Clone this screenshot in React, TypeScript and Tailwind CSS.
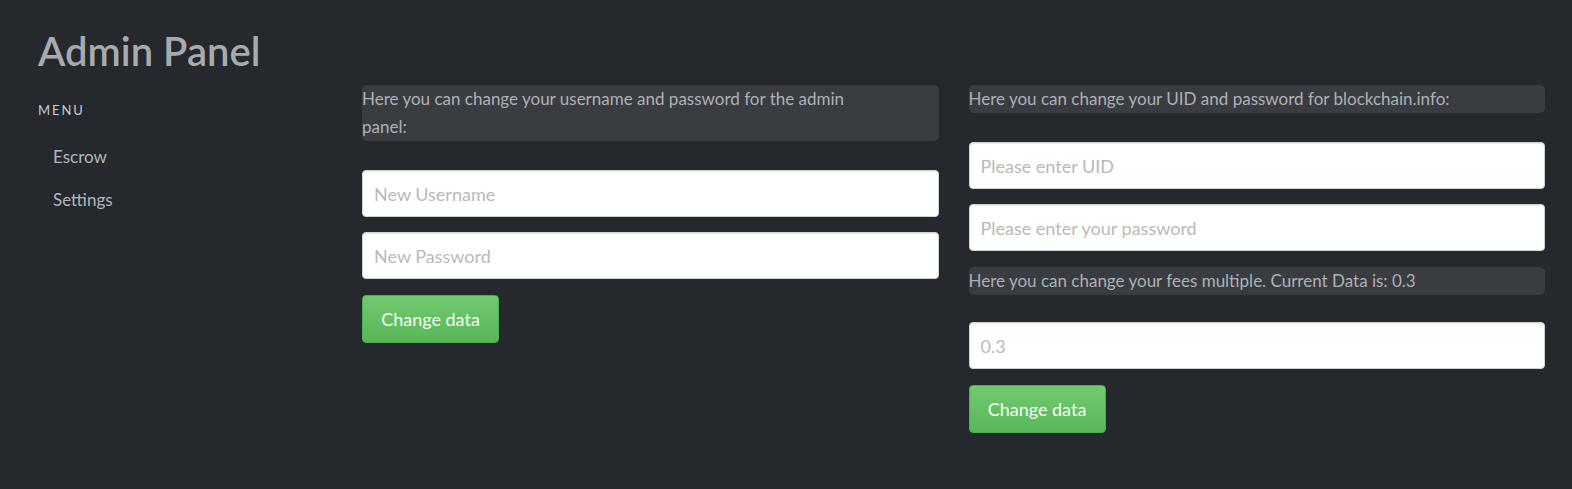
import React from 'react';

const FONT = "font-['Lato','Open_Sans',sans-serif]";

function Field({ placeholder }: { placeholder: string }) {
  return (
    <input
      type="text"
      placeholder={placeholder}
      className="block w-full h-[47px] rounded-[4px] border border-[#cfd3d6] bg-white px-[11px] text-[18px] text-[#555] placeholder:text-[#b9b9b9] shadow-[inset_0_1px_1px_rgba(0,0,0,0.08)] outline-none"
    />
  );
}

function Note({ children }: { children: React.ReactNode }) {
  return (
    <div className="rounded-[5px] bg-[#393c41] text-[17px] leading-[28px] text-[#aeb1b4]">
      {children}
    </div>
  );
}

function SubmitButton() {
  return (
    <button className="h-[48px] w-[137px] rounded-[4px] border border-[#4cae4c] bg-gradient-to-b from-[#72ca71] to-[#58b658] text-[18px] text-[#f4fff2]">
      Change data
    </button>
  );
}

export default function App() {
  return (
    <div className={`min-h-screen bg-[#25282d] ${FONT} flex`}>
      {/* Sidebar */}
      <aside className="w-[362px] shrink-0 pl-[38px] pt-[27px]">
        <h1 className="text-[40px] leading-[48px] font-semibold text-[#a8abae]">Admin Panel</h1>
        <div className="mt-[26px] text-[13px] tracking-[0.15em] text-[#c7cbce]">MENU</div>
        <nav className="mt-[23px] pl-[15px] flex flex-col gap-[18px] text-[17px] text-[#b3b6b9]">
          <a>Escrow</a>
          <a>Settings</a>
        </nav>
      </aside>

      {/* Content */}
      <main className="flex-1 pt-[85px] pr-[27px] grid grid-cols-2 gap-[30px] items-start">
        <section className="flex flex-col">
          <Note>
            Here you can change your username and password for the admin
            <br />
            panel:
          </Note>
          <div className="mt-[29px] flex flex-col gap-[15px]">
            <Field placeholder="New Username" />
            <Field placeholder="New Password" />
          </div>
          <div className="mt-[16px]">
            <SubmitButton />
          </div>
        </section>

        <section className="flex flex-col">
          <Note>Here you can change your UID and password for blockchain.info:</Note>
          <div className="mt-[29px] flex flex-col gap-[15px]">
            <Field placeholder="Please enter UID" />
            <Field placeholder="Please enter your password" />
          </div>
          <div className="mt-[16px]">
            <Note>Here you can change your fees multiple. Current Data is: 0.3</Note>
          </div>
          <div className="mt-[27px]">
            <Field placeholder="0.3" />
          </div>
          <div className="mt-[16px]">
            <SubmitButton />
          </div>
        </section>
      </main>
    </div>
  );
}
